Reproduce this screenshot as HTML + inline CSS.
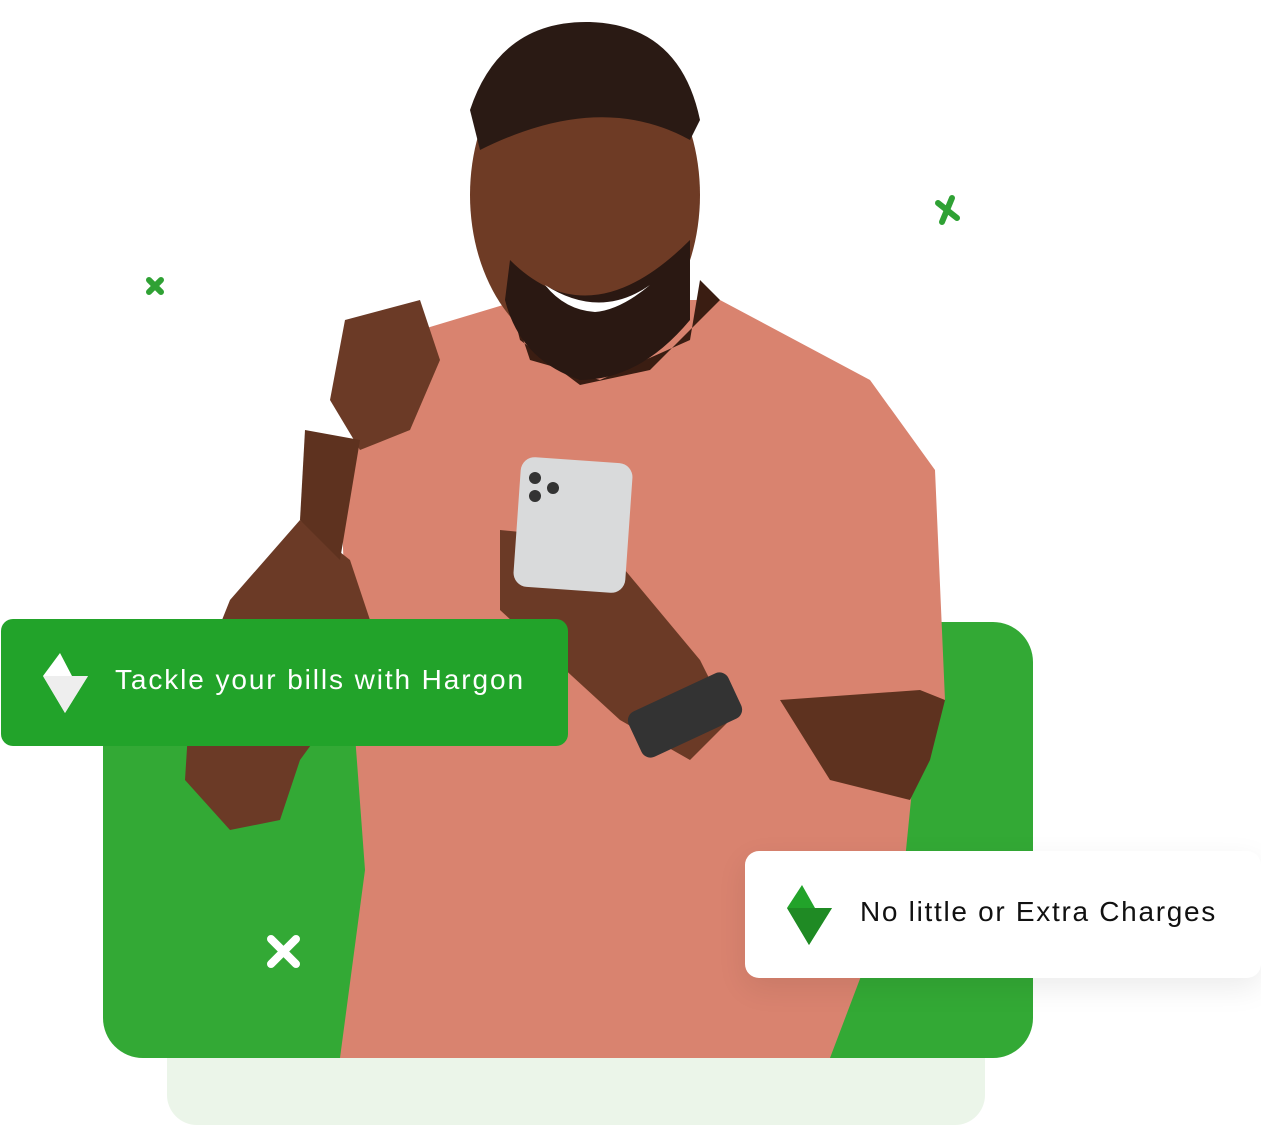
<!DOCTYPE html>
<html><head><style>
body{margin:0;width:1261px;height:1126px;background:#fff;position:relative;overflow:hidden;font-family:"Liberation Sans",sans-serif}
.a{position:absolute}
</style></head><body>
<div class="a" style="left:167px;top:990px;width:818px;height:135px;border-radius:30px;background:#ebf5e9"></div>
<div class="a" style="left:103px;top:622px;width:930px;height:436px;border-radius:40px;background:#33a935"></div>
<svg class="a" style="left:0;top:0" width="1261" height="1126">
<path d="M340 1058 L365 870 L345 600 L340 470 L420 330 L520 300 L720 300 L870 380 L935 470 L945 700 L915 760 L905 860 L830 1058 Z" fill="#d9836f"/>
<path d="M350 560 L300 520 L230 600 L190 700 L185 780 L230 830 L280 820 L300 760 L380 650 Z" fill="#6b3a26"/>
<path d="M345 320 L420 300 L440 360 L410 430 L360 450 L330 400 Z" fill="#6b3a26"/>
<path d="M305 430 L360 440 L340 560 L300 520 Z" fill="#5e321f"/>
<path d="M500 530 L600 540 L700 660 L730 720 L690 760 L620 720 L500 610 Z" fill="#6b3a26"/>
<path d="M920 690 L945 700 L930 760 L910 800 L830 780 L780 700 Z" fill="#5e321f"/>
<rect x="517" y="460" width="112" height="130" rx="14" fill="#d9dadb" transform="rotate(4 573 525)"/>
<circle cx="535" cy="478" r="6" fill="#333"/><circle cx="553" cy="488" r="6" fill="#333"/><circle cx="535" cy="496" r="6" fill="#333"/>
<path d="M510 300 L530 360 L600 380 L690 340 L700 280 L720 300 L650 370 L580 385 L520 340 Z" fill="#3a1d12"/>
<ellipse cx="585" cy="195" rx="115" ry="160" fill="#6e3b25"/>
<path d="M470 110 Q500 20 590 22 Q680 25 700 120 L690 140 Q600 90 480 150 Z" fill="#2a1a14"/>
<path d="M510 260 Q590 340 690 240 L690 320 Q640 380 580 380 Q520 360 505 300 Z" fill="#2a1812"/>
<path d="M545 285 Q600 320 650 285 Q620 310 595 312 Q565 310 545 285Z" fill="#fff"/>
<rect x="630" y="690" width="110" height="50" rx="10" fill="#333" transform="rotate(-25 685 715)"/>
<g stroke="#2fa134" stroke-width="6" stroke-linecap="round"><path d="M149 280 L161 292 M161 280 L149 292"/><path d="M938 203 L957 218 M952 198 L942 222"/></g>
<g stroke="#fff" stroke-width="8" stroke-linecap="round"><path d="M271 939 L296 964 M296 939 L271 964"/></g>
</svg>
<div class="a" style="left:1px;top:619px;width:567px;height:127px;border-radius:12px;background:#22a32a"></div>
<svg class="a" style="left:40px;top:650px" width="52" height="66"><path d="M20 3 L3 26 L25 63 L48 26 L32 26 Z" fill="#fff"/><path d="M3 26 L32 26 L48 26 L25 63 Z" fill="#eee"/></svg>
<div class="a" style="left:115px;top:664px;color:#fff;font-size:28px;letter-spacing:1.9px">Tackle your bills with Hargon</div>
<div class="a" style="left:745px;top:851px;width:516px;height:127px;border-radius:14px;background:#fff;box-shadow:0 10px 30px rgba(0,0,0,.08)"></div>
<svg class="a" style="left:785px;top:882px" width="52" height="66"><path d="M17 3 L2 26 L24 63 L47 26 L30 26 Z" fill="#22a32a"/><path d="M2 26 L47 26 L24 63 Z" fill="#1f8a24"/></svg>
<div class="a" style="left:860px;top:896px;color:#111;font-size:28px;letter-spacing:1.7px">No little or Extra Charges</div>
</body></html>
